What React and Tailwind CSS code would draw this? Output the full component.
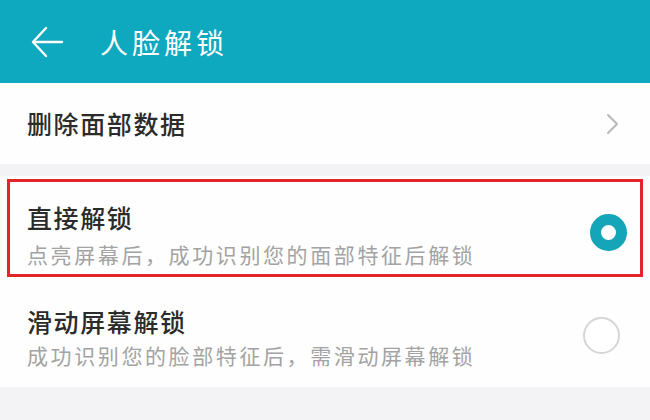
export default function App() {
  return (
    <div className="w-[650px] h-[420px] bg-[#f3f3f5] overflow-hidden font-['Noto_Sans_CJK_SC','Noto_Sans',sans-serif]">
      <div className="h-[83px] bg-[#0ea8bf] flex items-center pl-[31px]">
        <svg width="33" height="34" viewBox="0 0 33 34" fill="none" stroke="white" strokeWidth="2.4" strokeLinecap="round" strokeLinejoin="round">
          <path d="M31 17H3" />
          <path d="M15 3L2 17L15 31" />
        </svg>
        <span className="ml-[36px] text-white text-[28px] tracking-[4px] leading-none">人脸解锁</span>
      </div>
      <div className="h-[81px] bg-[#fefefe] flex items-center justify-between pl-[27px] pr-[31px]">
        <span className="text-[25px] tracking-[1.6px] text-[#2b2b2b] font-medium leading-none">删除面部数据</span>
        <svg width="13" height="22" viewBox="0 0 13 22" fill="none" stroke="#b8b8b8" strokeWidth="2" strokeLinecap="round" strokeLinejoin="round">
          <path d="M2 2L11 11L2 20" />
        </svg>
      </div>
      <div className="h-[12px]" />
      <div className="bg-[#fefefe] pt-[3px]">
        <div className="mx-[7px] h-[98px] border-[3px] border-[#e3262c] flex items-start justify-between pl-[17px] pr-[13px]">
          <div className="flex flex-col pt-[20px]">
            <span className="text-[25px] tracking-[1.6px] text-[#2b2b2b] font-medium leading-[30px]">直接解锁</span>
            <span className="mt-[9px] text-[21px] tracking-[2.6px] text-[#a3a3a3] leading-[26px] whitespace-nowrap">点亮屏幕后，成功识别您的面部特征后解锁</span>
          </div>
          <div className="mt-[32px] w-[37px] h-[37px] rounded-full border-[11px] border-[#14a5b8] bg-white" />
        </div>
        <div className="h-[110px] flex items-start justify-between pl-[27px] pr-[30px]">
          <div className="flex flex-col pt-[29px]">
            <span className="text-[25px] tracking-[1.6px] text-[#2b2b2b] font-medium leading-[30px]">滑动屏幕解锁</span>
            <span className="mt-[6px] text-[21px] tracking-[2.6px] text-[#a3a3a3] leading-[26px] whitespace-nowrap">成功识别您的脸部特征后，需滑动屏幕解锁</span>
          </div>
          <div className="mt-[40px] w-[37px] h-[37px] rounded-full border-2 border-[#d6d6d6] bg-white" />
        </div>
      </div>
    </div>
  );
}
